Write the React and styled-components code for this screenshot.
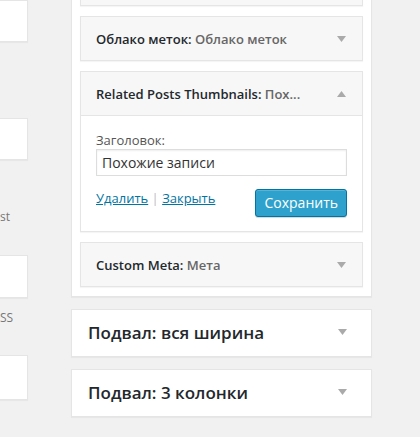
import React from "react";
import styled, { createGlobalStyle } from "styled-components";

const GlobalStyle = createGlobalStyle`
  html, body { margin: 0; padding: 0; }
  body {
    background: #f1f1f1;
    font-family: "Open Sans", "Noto Sans", sans-serif;
    overflow: hidden;
  }
  * { box-sizing: border-box; }
`;

const Page = styled.div`
  display: flex;
  align-items: flex-start;
  margin-top: -50px;
  height: 487px;
`;

const LeftCol = styled.div`
  width: 28px;
  flex-shrink: 0;
  display: flex;
  flex-direction: column;
  padding-top: 50px;
`;

const WidgetBox = styled.div`
  height: ${(p) => p.$h || 42}px;
  background: #fff;
  border: 1px solid #e5e5e5;
  border-left: none;
  box-shadow: 0 1px 1px rgba(0, 0, 0, 0.04);
`;

const Desc = styled.div`
  height: ${(p) => p.$h}px;
  padding-top: ${(p) => p.$top}px;
  font-size: 12px;
  line-height: 16px;
  color: #777;
  white-space: nowrap;
  overflow: hidden;
`;

const MainCol = styled.div`
  width: 301px;
  margin-left: 43px;
  flex-shrink: 0;
  display: flex;
  flex-direction: column;
  gap: 12px;
`;

const Panel = styled.div`
  background: #fff;
  border: 1px solid #e5e5e5;
  box-shadow: 0 1px 1px rgba(0, 0, 0, 0.04);
  padding: 10px 8px 9px;
  display: flex;
  flex-direction: column;
  gap: 10px;
`;

const Widget = styled.div`
  background: #fff;
  border: 1px solid #e5e5e5;
  box-shadow: 0 1px 1px rgba(0, 0, 0, 0.04);
`;

const WidgetTop = styled.div`
  height: 43px;
  background: #f7f7f7;
  display: flex;
  align-items: center;
  justify-content: space-between;
  padding: 0 16px 0 15px;
  border-bottom: ${(p) => (p.$open ? "1px solid #e5e5e5" : "none")};
  box-sizing: content-box;
`;

const WidgetTitle = styled.h3`
  margin: 0;
  font-size: 13px;
  font-weight: 600;
  color: #23282d;
  white-space: nowrap;
  overflow: hidden;
`;

const InTitle = styled.span`
  color: #666;
`;

const Arrow = ({ up, color = "#aaa" }) => (
  <svg width="9" height="6" viewBox="0 0 9 6" style={{ flexShrink: 0 }}>
    {up ? (
      <polygon points="0,6 9,6 4.5,0" fill={color} />
    ) : (
      <polygon points="0,0 9,0 4.5,6" fill={color} />
    )}
  </svg>
);

const WidgetBody = styled.div`
  padding: 15px 15px 14px;
  display: flex;
  flex-direction: column;
`;

const Label = styled.label`
  font-size: 13px;
  line-height: 18px;
  color: #555;
`;

const TextInput = styled.input`
  width: 100%;
  height: 27px;
  border: 1px solid #ddd;
  box-shadow: inset 0 1px 2px rgba(0, 0, 0, 0.07);
  background: #fff;
  font-family: "Open Sans", "Noto Sans", sans-serif;
  font-size: 14px;
  color: #333;
  padding: 0 5px;
  outline: none;
`;

const Actions = styled.div`
  display: flex;
  justify-content: space-between;
  align-items: flex-start;
  margin-top: 13px;
`;

const Links = styled.div`
  font-size: 13px;
  line-height: 18px;
  color: #bbb;
`;

const Link = styled.a`
  color: #0074a2;
  text-decoration: underline;
  cursor: pointer;
`;

const SaveButton = styled.button`
  height: 28px;
  padding: 0 8px;
  background: #2ea2cc;
  border: 1px solid #0074a2;
  border-radius: 3px;
  box-shadow: inset 0 1px 0 rgba(120, 200, 230, 0.5), 0 1px 0 rgba(0, 0, 0, 0.15);
  color: #fff;
  font-family: "Open Sans", "Noto Sans", sans-serif;
  font-size: 14px;
  line-height: 26px;
  cursor: pointer;
`;

const Section = styled.div`
  height: 48px;
  background: #fff;
  border: 1px solid #e5e5e5;
  box-shadow: 0 1px 1px rgba(0, 0, 0, 0.04);
  display: flex;
  align-items: center;
  justify-content: space-between;
  padding: 0 24px 2px 16px;
`;

const SectionTitle = styled.h2`
  margin: 0;
  font-size: 17px;
  font-weight: 600;
  color: #23282d;
`;

const ClosedWidget = ({ name, inTitle }) => (
  <Widget>
    <WidgetTop>
      {name ? (
        <WidgetTitle>
          {name}: <InTitle>{inTitle}</InTitle>
        </WidgetTitle>
      ) : (
        <span />
      )}
      <Arrow />
    </WidgetTop>
  </Widget>
);

export default function App() {
  return (
    <>
      <GlobalStyle />
      <Page>
        <LeftCol>
          <WidgetBox />
          <Desc $h={76} $top={0} />
          <WidgetBox />
          <Desc $h={95} $top={49}>st</Desc>
          <WidgetBox $h={43} />
          <Desc $h={57} $top={12}>SS</Desc>
          <WidgetBox $h={45} />
        </LeftCol>
        <MainCol>
          <Panel>
            <ClosedWidget />
            <ClosedWidget name="Облако меток" inTitle="Облако меток" />
            <Widget>
              <WidgetTop $open>
                <WidgetTitle>
                  Related Posts Thumbnails: <InTitle>Пох...</InTitle>
                </WidgetTitle>
                <Arrow up />
              </WidgetTop>
              <WidgetBody>
                <Label htmlFor="rpt-title">Заголовок:</Label>
                <TextInput id="rpt-title" defaultValue="Похожие записи" />
                <Actions>
                  <Links>
                    <Link>Удалить</Link> | <Link>Закрыть</Link>
                  </Links>
                  <SaveButton>Сохранить</SaveButton>
                </Actions>
              </WidgetBody>
            </Widget>
            <ClosedWidget name="Custom Meta" inTitle="Мета" />
          </Panel>
          <Section>
            <SectionTitle>Подвал: вся ширина</SectionTitle>
            <Arrow />
          </Section>
          <Section>
            <SectionTitle>Подвал: 3 колонки</SectionTitle>
            <Arrow />
          </Section>
        </MainCol>
      </Page>
    </>
  );
}
